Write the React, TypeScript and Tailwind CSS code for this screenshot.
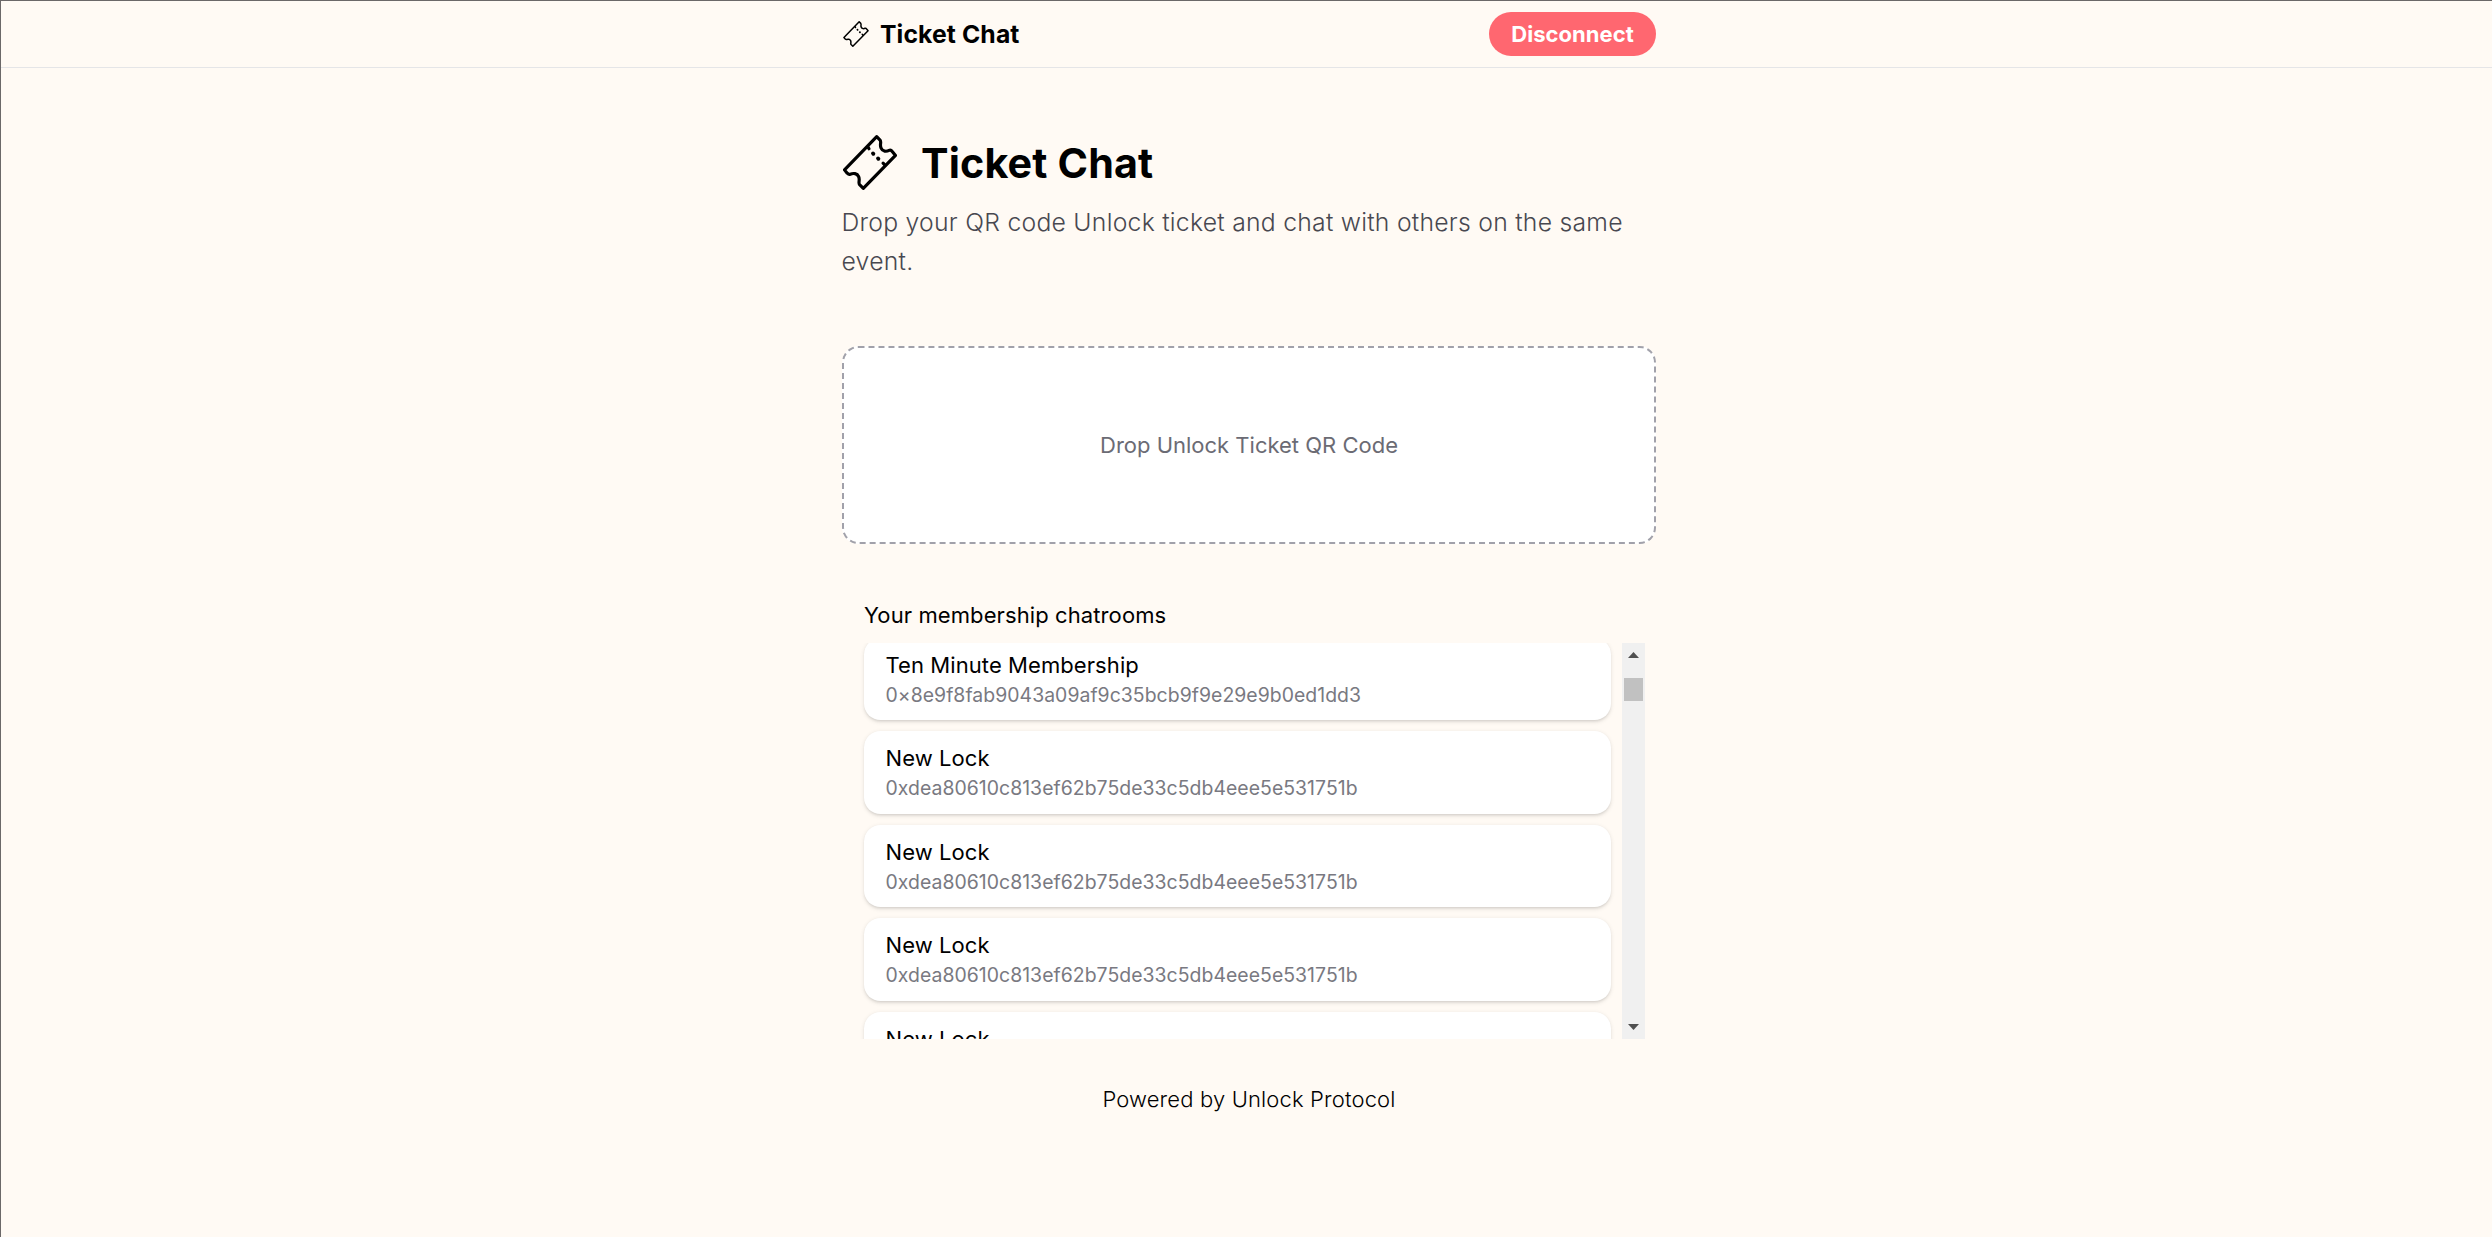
import React from "react";

function TicketIcon({ className }: { className: string }) {
  return (
    <svg
      viewBox="24 16 160 164"
      className={className}
      fill="none"
      stroke="currentColor"
      strokeWidth={9.5}
      strokeLinejoin="round"
      strokeLinecap="round"
    >
      <path d="M124 21L134 31C139 37 132 45 137 55C142 66 153 66 161 62C165 60 168 62 171 66L180 77L84 175L73 164C68 158 75 150 70 140C66 130 54 129 45 133C42 134 39 133 36 130L28 120Z" />
      <path d="M98 52L101 57M143 100L148 105" />
      <path d="M113 71L114 72M128 86L129 87" strokeWidth={11.5} />
    </svg>
  );
}

const rooms = [
  { name: "Ten Minute Membership", address: "0×8e9f8fab9043a09af9c35bcb9f9e29e9b0ed1dd3" },
  { name: "New Lock", address: "0xdea80610c813ef62b75de33c5db4eee5e531751b" },
  { name: "New Lock", address: "0xdea80610c813ef62b75de33c5db4eee5e531751b" },
  { name: "New Lock", address: "0xdea80610c813ef62b75de33c5db4eee5e531751b" },
  { name: "New Lock", address: "0xdea80610c813ef62b75de33c5db4eee5e531751b" },
];

function RoomCard({ name, address }: { name: string; address: string }) {
  return (
    <li className="h-[82.5px] shrink-0 rounded-[16.5px] bg-white px-[21.5px] py-[11px] shadow-[0_1.4px_4px_rgba(0,0,0,0.1),0_1.4px_2.75px_-1.4px_rgba(0,0,0,0.1)]">
      <div className="text-[22px] leading-[33px] tracking-[0.08px]">{name}</div>
      <div className="text-[19.4px] leading-[27.5px] tracking-[0.05px] text-[#797981]">
        {address}
      </div>
    </li>
  );
}

function Scrollbar() {
  return (
    <div className="flex w-[23px] flex-col items-center bg-[#f0f0f0]">
      <svg viewBox="0 0 11 6" className="mt-[9px] h-[6px] w-[11px] fill-[#505050]">
        <path d="M5.5 0L11 6H0Z" />
      </svg>
      <div className="mt-[20px] h-[23px] w-[19px] bg-[#c1c1c1]" />
      <svg viewBox="0 0 11 6" className="mt-auto mb-[9px] h-[6px] w-[11px] fill-[#505050]">
        <path d="M0 0H11L5.5 6Z" />
      </svg>
    </div>
  );
}

export default function App() {
  return (
    <div className="h-[1237px] overflow-hidden border-t border-l border-[#6b6868] bg-[#fffaf4] font-['Inter',sans-serif] text-black">
      <header className="h-[67px] border-b border-[#e5e5e7]">
        <div className="ml-[841px] flex h-full w-[814px] items-center justify-between">
          <div className="flex items-center">
            <TicketIcon className="ml-px h-[26px] w-[26px]" />
            <span className="ml-[11px] text-[24.75px] leading-[38.5px] font-bold tracking-[0.1px]">
              Ticket Chat
            </span>
          </div>
          <button className="h-[44px] w-[167px] rounded-full bg-[#ff6770] text-[22px] leading-[33px] font-bold tracking-[0.05px] text-white">
            Disconnect
          </button>
        </div>
      </header>

      <main className="ml-[841px] w-[814px] pt-[67px]">
        <h1 className="flex h-[55px] items-center text-[41.25px] leading-[49.5px] font-bold tracking-[0.15px]">
          <TicketIcon className="ml-px h-[55px] w-[54px]" />
          <span className="ml-6 pt-[2px]">Ticket Chat</span>
        </h1>
        <p className="mt-[13px] -ml-[0.5px] text-[24.75px] leading-[38.5px] font-light tracking-[0.25px] text-[#484850]">
          Drop your QR code Unlock ticket and chat with others on the same event.
        </p>

        <div className="mt-[66px] flex h-[198px] items-center justify-center rounded-[16.5px] border-2 border-dashed border-[#a1a1aa] bg-white text-[22px] leading-[33px] text-[#6b6b74]">
          Drop Unlock Ticket QR Code
        </div>

        <section className="mt-[55px] px-[22px]">
          <h2 className="text-[22px] leading-[33px] tracking-[0.1px]">Your membership chatrooms</h2>
          <div className="mt-[11px] -mr-[11px] flex h-[396px]">
            <ul className="-ml-[11px] flex flex-1 flex-col gap-[11px] overflow-hidden px-[11px]">
              <li className="-mb-[17.5px] h-px shrink-0" />
              {rooms.map((room, i) => (
                <RoomCard key={i} name={room.name} address={room.address} />
              ))}
            </ul>
            <Scrollbar />
          </div>
        </section>

        <footer className="mt-[44px] text-center text-[22px] leading-[33px] font-light tracking-[0.15px]">
          Powered by Unlock Protocol
        </footer>
      </main>
    </div>
  );
}
